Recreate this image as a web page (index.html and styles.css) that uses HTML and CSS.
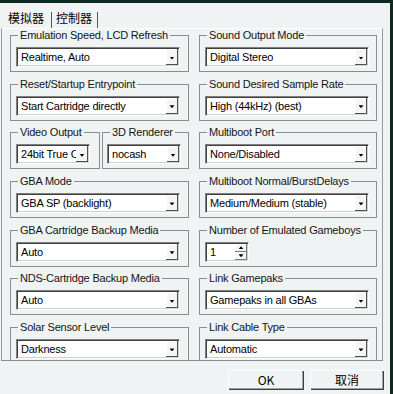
FILE: index.html
```html
<!DOCTYPE html>
<html>
<head>
<meta charset="utf-8">
<link rel="stylesheet" href="styles.css">
</head>
<body>
<div class="window">
  <div class="tabs">
    <div class="tab first">模拟器</div>
    <div class="tab">控制器</div>
  </div>
  <div class="panel">
    <div class="grid">
      <div class="group"><span class="legend">Emulation Speed, LCD Refresh</span>
        <div class="select"><span class="value">Realtime, Auto</span><span class="drop"></span></div></div>
      <div class="group"><span class="legend">Sound Output Mode</span>
        <div class="select"><span class="value">Digital Stereo</span><span class="drop"></span></div></div>

      <div class="group"><span class="legend">Reset/Startup Entrypoint</span>
        <div class="select"><span class="value">Start Cartridge directly</span><span class="drop"></span></div></div>
      <div class="group"><span class="legend">Sound Desired Sample Rate</span>
        <div class="select"><span class="value">High (44kHz) (best)</span><span class="drop"></span></div></div>

      <div class="pair">
        <div class="group video"><span class="legend">Video Output</span>
          <div class="select small"><span class="value">24bit True Color</span><span class="drop"></span></div></div>
        <div class="group renderer"><span class="legend">3D Renderer</span>
          <div class="select small"><span class="value">nocash</span><span class="drop"></span></div></div>
      </div>
      <div class="group"><span class="legend">Multiboot Port</span>
        <div class="select"><span class="value">None/Disabled</span><span class="drop"></span></div></div>

      <div class="group"><span class="legend">GBA Mode</span>
        <div class="select"><span class="value">GBA SP (backlight)</span><span class="drop"></span></div></div>
      <div class="group"><span class="legend">Multiboot Normal/BurstDelays</span>
        <div class="select"><span class="value">Medium/Medium (stable)</span><span class="drop"></span></div></div>

      <div class="group"><span class="legend">GBA Cartridge Backup Media</span>
        <div class="select"><span class="value">Auto</span><span class="drop"></span></div></div>
      <div class="group"><span class="legend">Number of Emulated Gameboys</span>
        <div class="spin"><span class="value">1</span><span class="arrows"><span class="up"></span><span class="down"></span></span></div></div>

      <div class="group"><span class="legend">NDS-Cartridge Backup Media</span>
        <div class="select"><span class="value">Auto</span><span class="drop"></span></div></div>
      <div class="group"><span class="legend">Link Gamepaks</span>
        <div class="select"><span class="value">Gamepaks in all GBAs</span><span class="drop"></span></div></div>

      <div class="group"><span class="legend">Solar Sensor Level</span>
        <div class="select"><span class="value">Darkness</span><span class="drop"></span></div></div>
      <div class="group"><span class="legend">Link Cable Type</span>
        <div class="select"><span class="value">Automatic</span><span class="drop"></span></div></div>
    </div>
  </div>
  <div class="buttons">
    <button class="btn ok">OK</button>
    <button class="btn cancel">取消</button>
  </div>
</div>
</body>
</html>
```
FILE: styles.css
```css
html, body {
  margin: 0;
  padding: 0;
  background: #eff3f3;
}
body {
  font-family: "Liberation Sans", Arial, sans-serif;
  font-size: 11px;
  color: #111;
}
.window {
  box-sizing: border-box;
  width: 393px;
  height: 394px;
  border-top: 3px solid #0c2a20;
  border-right: 3px solid #0c2a20;
  background: #eff3f3;
  overflow: hidden;
}
.tabs {
  display: flex;
  align-items: flex-end;
  height: 25px;
  padding-left: 8px;
  box-sizing: border-box;
}
.tab {
  font-family: "Noto Sans CJK SC", sans-serif;
  font-size: 12px;
  line-height: 12px;
  padding-bottom: 4px;
  color: #000;
  border-right: 1px solid #555;
}
.tab.first {
  padding-right: 7px;
}
.tab + .tab {
  padding-left: 4px;
  padding-right: 5px;
}
.panel {
  box-sizing: border-box;
  margin-left: 1px;
  width: 382px;
  height: 333px;
  border-left: 1px solid #9a9a9a;
  border-right: 1px solid #9a9a9a;
  border-bottom: 1px solid #8a8a8a;
  border-top: 1px solid #ffffff;
  padding: 6px 5px 0 8px;
  overflow: hidden;
}
.grid {
  display: grid;
  grid-template-columns: 179px 178px;
  grid-auto-rows: 37px;
  column-gap: 10px;
  row-gap: 11.67px;
  letter-spacing: -0.2px;
}
.pair {
  display: flex;
  gap: 2px;
}
.group {
  position: relative;
  box-sizing: border-box;
  height: 37px;
  border: 1px solid #8c8c8c;
  padding: 11px 0 0 5px;
}
.group.video {
  width: 90px;
}
.group.renderer {
  width: 87px;
  padding-left: 4px;
}
.legend {
  position: absolute;
  top: -7px;
  left: 7px;
  padding: 0 2px;
  line-height: 13px;
  background: #eff3f3;
  white-space: nowrap;
  color: #151515;
}
.select, .spin {
  box-sizing: border-box;
  display: flex;
  width: 164px;
  height: 20px;
  padding: 1px;
  background: #fff;
  border-top: 1px solid #808080;
  border-left: 1px solid #808080;
  border-right: 1px solid #fff;
  border-bottom: 1px solid #fff;
  box-shadow: inset 1px 1px #404040, inset -1px -1px #d4d0c8;
}
.select.small {
  width: 74px;
}
.value {
  flex: 1;
  min-width: 0;
  overflow: hidden;
  white-space: nowrap;
  padding: 1px 0 0 3px;
  line-height: 15px;
  color: #000;
}
.drop {
  box-sizing: border-box;
  flex: none;
  width: 12px;
  height: 16px;
  display: flex;
  align-items: center;
  justify-content: center;
  padding-top: 2px;
  background: #f4f6f6;
  box-shadow: inset -1px -1px #505050, inset 1px 1px #fff;
}
.drop::after {
  content: "";
  width: 5px;
  height: 3px;
  background: #000;
  clip-path: polygon(0 0, 100% 0, 50% 100%);
}
.spin {
  width: 44px;
}
.arrows {
  flex: none;
  width: 12px;
  display: flex;
  flex-direction: column;
}
.up, .down {
  flex: 1;
  display: flex;
  align-items: center;
  justify-content: center;
  background: #f4f6f6;
  box-shadow: inset -1px -1px #7a7a7a, inset 1px 1px #fff;
}
.up::after, .down::after {
  content: "";
  width: 5px;
  height: 3px;
  background: #000;
}
.up::after {
  clip-path: polygon(50% 0, 100% 100%, 0 100%);
}
.down::after {
  clip-path: polygon(0 0, 100% 0, 50% 100%);
}
.buttons {
  display: flex;
  justify-content: flex-end;
  gap: 6px;
  padding: 9px 6px 0 0;
}
.btn {
  box-sizing: border-box;
  height: 20px;
  padding: 0;
  border: none;
  background: #eff3f3;
  font-family: "Noto Sans CJK SC", sans-serif;
  font-size: 12px;
  line-height: 18px;
  color: #000;
  box-shadow: inset 1px 1px #fff, inset -1px -1px #404040, inset -2px -2px #a0a0a0;
}
.btn.ok {
  width: 76px;
}
.btn.cancel {
  width: 74px;
}
```
